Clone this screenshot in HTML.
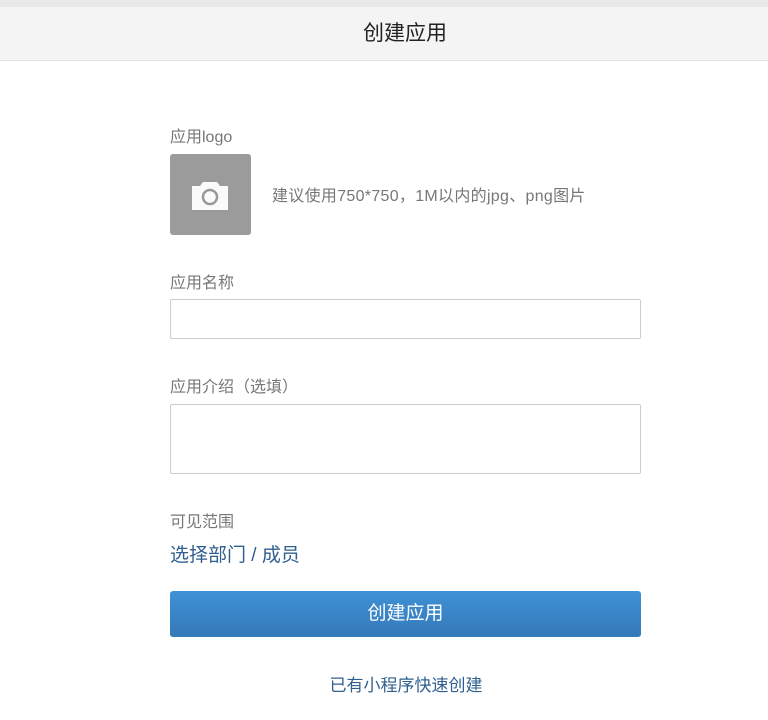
<!DOCTYPE html>
<html><head><meta charset="utf-8"><style>
body{margin:0;width:768px;height:720px;background:#fff;font-family:"Liberation Sans","Noto Sans CJK SC",sans-serif;position:relative;overflow:hidden}
.top{position:absolute;left:0;top:0;width:768px;height:7px;background:#e8e8e8}
.hdr{position:absolute;left:0;top:7px;width:768px;height:53px;background:#f4f4f4;border-bottom:1px solid #e2e2e2;line-height:54px;font-size:21px;color:#222}
.lbl{position:absolute;left:170px;font-size:16px;color:#777}
.box{position:absolute;left:170px;width:469px;border:1px solid #ccc;border-radius:2px;background:#fff}
</style></head><body>
<div class="top"></div>
<div class="hdr"><span style="position:absolute;left:363px">创建应用</span></div>
<div class="lbl" style="top:123px">应用logo</div>
<div style="position:absolute;left:170px;top:154px;width:81px;height:81px;background:#9b9b9b;border-radius:3px">
<svg width="81" height="81" viewBox="0 0 81 81"><path d="M22 32h8l3-4h14l3 4h8v24H22z" fill="#fafafa"/><circle cx="40" cy="43" r="7" fill="none" stroke="#999" stroke-width="2.5"/></svg></div>
<div style="position:absolute;left:272px;top:182px;font-size:16px;color:#777;letter-spacing:0.3px">建议使用750*750，1M以内的jpg、png图片</div>
<div class="lbl" style="top:269px">应用名称</div>
<div class="box" style="top:299px;height:38px"></div>
<div class="lbl" style="top:373px">应用介绍（选填）</div>
<div class="box" style="top:404px;height:68px"></div>
<div class="lbl" style="top:508px">可见范围</div>
<div style="position:absolute;left:170px;top:540px;font-size:19px;color:#2f5f8f">选择部门 / 成员</div>
<div style="position:absolute;left:170px;top:591px;width:471px;height:46px;border-radius:3px;background:linear-gradient(#3f91d6,#3479b8);color:#fff;text-align:center;line-height:46px;font-size:19px">创建应用</div>
<div style="position:absolute;left:0;width:812px;top:671px;text-align:center;font-size:17px;color:#2f5f8f">已有小程序快速创建</div>
</body></html>
